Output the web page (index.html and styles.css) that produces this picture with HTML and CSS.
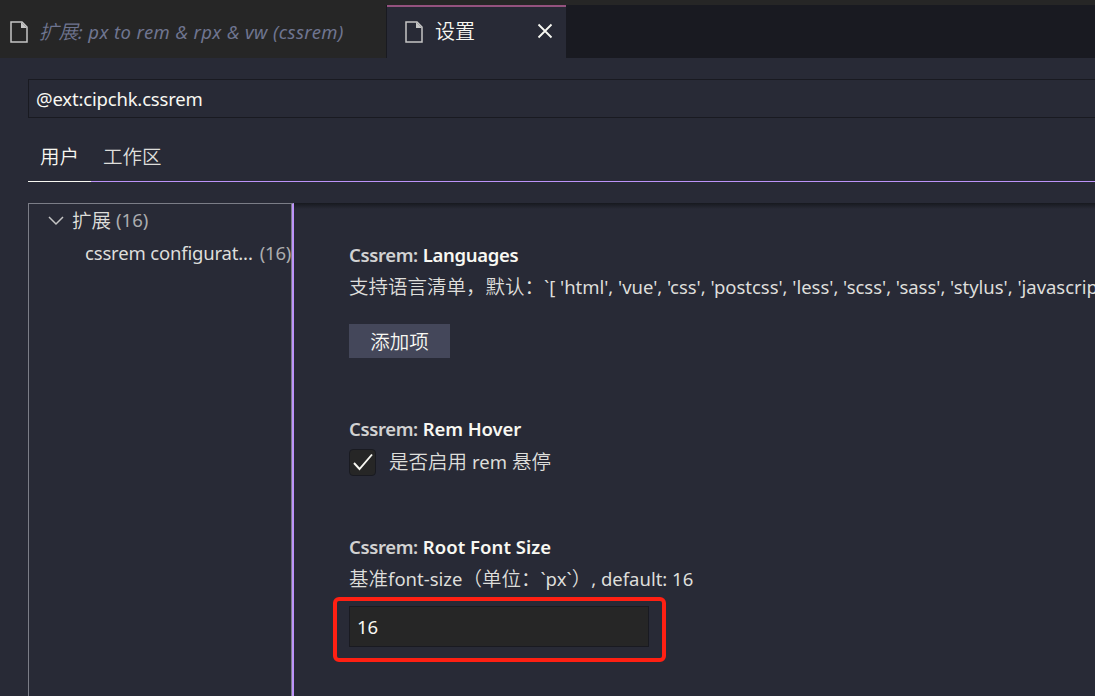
FILE: index.html
```html
<!DOCTYPE html>
<html lang="zh-CN">
<head>
<meta charset="utf-8">
<title>设置</title>
<link rel="stylesheet" href="styles.css">
</head>
<body>
<div class="window">
  <header class="tabs">
    <div class="tab tab-preview">
      <svg class="file-icon" width="18" height="22" viewBox="0 0 18 22"><path d="M1 1H12L17 6V21H1Z" fill="none" stroke="#c5c5c5" stroke-width="1.5"/><path d="M11 1V7H17Z" fill="#c5c5c5"/></svg>
      <span class="tab-title">扩展<span class="latin preview-name">: px to rem &amp; rpx &amp; vw (cssrem)</span></span>
    </div>
    <div class="tab tab-active">
      <svg class="file-icon" width="18" height="22" viewBox="0 0 18 22"><path d="M1 1H12L17 6V21H1Z" fill="none" stroke="#c5c5c5" stroke-width="1.5"/><path d="M11 1V7H17Z" fill="#c5c5c5"/></svg>
      <span class="tab-title">设置</span>
      <svg class="close" width="16" height="16" viewBox="0 0 16 16"><path d="M1.5 1.5L14.5 14.5M14.5 1.5L1.5 14.5" stroke="#f8f8f2" stroke-width="1.8"/></svg>
    </div>
  </header>
  <main class="editor">
    <div class="search"><span class="latin search-text">@ext:cipchk.cssrem</span></div>
    <nav class="scopes">
      <div class="scope scope-active">用户</div>
      <div class="scope">工作区</div>
    </nav>
    <div class="body">
      <aside class="tree">
        <div class="row">
          <svg class="chevron" width="16" height="10" viewBox="0 0 16 10"><path d="M1 1L8 8L15 1" fill="none" stroke="#c5c5c5" stroke-width="1.5"/></svg>
          <span>扩展</span><span class="latin count">(16)</span>
        </div>
        <div class="row child"><span class="latin child-name">cssrem configurat...</span><span class="latin count">(16)</span></div>
      </aside>
      <section class="settings">
        <article class="setting languages">
          <h2 class="latin"><span class="category">Cssrem:</span><span class="name-languages">Languages</span></h2>
          <p>支持语言清单，默认：<span class="latin list">`[ 'html', 'vue', 'css', 'postcss', 'less', 'scss', 'sass', 'stylus', 'javascrip</span></p>
          <button class="add">添加项</button>
        </article>
        <article class="setting hover">
          <h2 class="latin"><span class="category">Cssrem:</span><span class="name-hover">Rem Hover</span></h2>
          <div class="check-row">
            <span class="checkbox"><svg width="20" height="18" viewBox="0 0 20 18"><path d="M1 10L6.5 16L19 1.5" fill="none" stroke="#f8f8f2" stroke-width="1.9"/></svg></span>
            <span class="check-label">是否启用<span class="latin rem">rem</span>悬停</span>
          </div>
        </article>
        <article class="setting size">
          <h2 class="latin"><span class="category">Cssrem:</span><span class="name-size">Root Font Size</span></h2>
          <p>基准<span class="latin fs">font-size</span>（单位：<span class="latin px">`px`</span>）<span class="latin def">, default: 16</span></p>
          <div class="highlight"><div class="number latin">16</div></div>
        </article>
      </section>
    </div>
  </main>
</div>
</body>
</html>
```
FILE: styles.css
```css
* { box-sizing: border-box; }
body { margin: 0; background: #282a36; color: #dededb; font-family: "Noto Sans CJK SC", sans-serif; font-size: 19.5px; font-weight: 350; }
.window { width: 1095px; height: 696px; overflow: hidden; display: flex; flex-direction: column; white-space: nowrap; }
.latin { font-family: "Noto Sans", sans-serif; font-size: 18.5px; font-weight: 400; }
.tabs { flex: none; height: 58px; border-top: 5px solid #262626; background: #191a21; display: flex; }
.tab { height: 53px; display: flex; align-items: center; }
.file-icon { flex: none; }
.tab-title { padding-bottom: 2px; }
.tab-preview { width: 387px; padding-left: 10px; gap: 11px; background: #262626; border-right: 1px solid #191a21; color: #6f7590; font-style: italic; }
.preview-name { letter-spacing: 0.4px; }
.tab-active { width: 179px; padding: 0 13px 2px 18px; border-top: 2px solid #94527e; background: #282a36; color: #f8f8f2; }
.tab-active .tab-title { margin-left: 12px; font-size: 20px; }
.close { margin: 0 0 2px auto; }
.editor { flex: 1; min-height: 0; padding: 21px 0 0 28px; display: flex; flex-direction: column; }
.search { flex: none; height: 39px; border: 1px solid #191a21; border-right: 0; padding-left: 7px; color: #f8f8f2; display: flex; align-items: center; }
.search-text { letter-spacing: -0.18px; }
.scopes { flex: none; height: 64px; display: flex; border-bottom: 1px solid #bd93f9; }
.scope { height: 64px; padding: 13px 12px 0; line-height: 50px; }
.scope-active { width: 63px; border-bottom: 1px solid #f8f8f2; color: #f8f8f2; }
.body { flex: 1; min-height: 0; margin-top: 21px; display: flex; }
.tree { flex: none; width: 266px; border: 1px solid #7b7d87; border-bottom: 0; border-right: 2px solid #bd93f9; box-shadow: inset -1px 0 #7b7d87; }
.row { height: 33px; display: flex; align-items: center; padding: 0 0 2px 19px; }
.chevron { margin: 2px 8px 0 0; }
.count { color: #acadae; margin-left: 5px; }
.child { padding-left: 56px; }
.child-name { letter-spacing: -0.17px; }
.child .count { margin-left: 7px; letter-spacing: -0.2px; }
.settings { flex: 1; min-width: 0; padding: 36px 0 0 55px; background: linear-gradient(#17191f, #282a36) 0 0 / 100% 6px no-repeat; }
h2 { margin: 0; height: 31px; line-height: 32px; display: flex; gap: 5px; }
h2.latin { font-weight: 600; color: #f8f8f2; }
.category { color: #d2d2d2; letter-spacing: -0.37px; }
.name-languages { letter-spacing: -0.33px; }
.name-hover { letter-spacing: -0.1px; }
.name-size { letter-spacing: 0.05px; }
.list { letter-spacing: -0.03px; }
p { margin: 0; height: 32px; line-height: 32px; }
.languages { height: 174px; }
.hover { height: 118px; }
.add { display: block; margin: 22px 0 0; width: 101px; height: 34px; padding: 0; border: 0; background: #44475a; color: #f8f8f2; font: inherit; line-height: 34px; }
.check-row { height: 36px; display: flex; align-items: center; gap: 13px; }
.check-label { padding-bottom: 3px; }
.checkbox { width: 27px; height: 27px; border: 1px solid #191a21; border-radius: 4px; background: #262626; display: flex; align-items: center; justify-content: center; }
.rem { margin: 0 5px; }
.highlight { width: 333px; height: 65px; margin: 3px 0 0 -16px; border: 4px solid #ff2013; border-radius: 6px; padding: 5px 0 0 12px; }
.number { width: 300px; height: 41px; border: 1px solid #191a21; background: #262626; color: #f8f8f2; padding-left: 7px; line-height: 39px; }
```
